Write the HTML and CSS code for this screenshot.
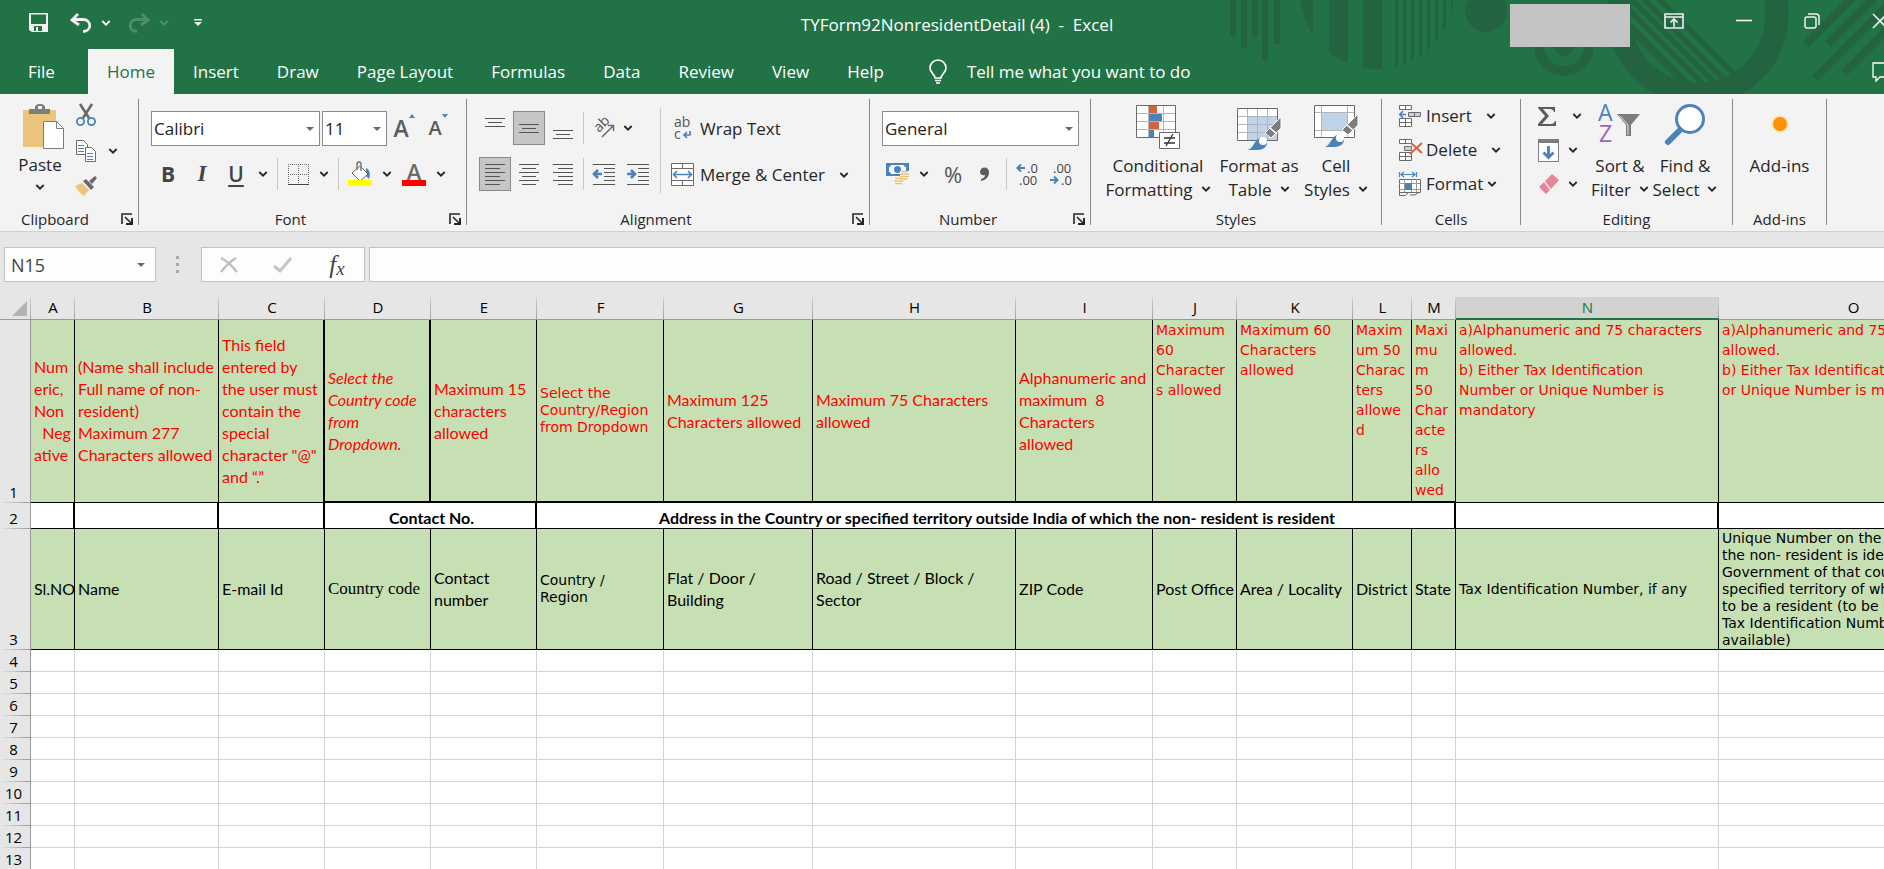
FILE: index.html
```html
<!DOCTYPE html>
<html lang="en">
<head>
<meta charset="utf-8">
<title>TYForm92NonresidentDetail (4) - Excel</title>
<link rel="stylesheet" href="styles.css">
</head>
<body>
<svg class="defs" aria-hidden="true">
  <symbol id="chev" viewBox="0 0 10 6"><path d="M1.300 1L5 4.700 8.700 1" fill="none" stroke="currentColor" stroke-width="1.800"/></symbol>
  <symbol id="tri" viewBox="0 0 8 4"><path d="M0 0h8l-4 4z" fill="#6a6a6a"/></symbol>
  <symbol id="launch" viewBox="0 0 12 12"><path d="M1 11V1h10M4 4l6 6" fill="none" stroke="#262626" stroke-width="1.6"/><path d="M12 5v7H5v-2h5V5z" fill="#262626"/></symbol>
</svg>

<header class="top">
  <svg class="pattern" width="660" height="94" viewBox="1224 0 660 94" aria-hidden="true">
    <defs>
      <clipPath id="inner"><circle cx="1698" cy="15" r="68"/></clipPath>
      <clipPath id="disc"><circle cx="1377" cy="-8" r="77"/></clipPath>
    </defs>
    <g fill="#24633f">
      <path d="M1230 0h6v37h-6zM1241 0h6v48h-6zM1252 0h6v37h-6zM1262 0h6v61h-6zM1274 0h6v44h-6z"/>
      <path clip-path="url(#disc)" d="M1299 0h14v80h-14zM1329 0h19v80h-19zM1363 0h19v80h-19zM1395 0h3v80h-3zM1403 0h3v80h-3zM1411 0h3v80h-3zM1419 0h3v80h-3zM1427 0h3v80h-3zM1435 0h3v80h-3zM1443 0h3v80h-3zM1451 0h3v80h-3z"/>
      <circle cx="1486" cy="11" r="21"/>
      <circle cx="1564" cy="46" r="10"/>
    </g>
    <g fill="none" stroke="#24633f">
      <circle cx="1564" cy="46" r="25" stroke-width="10"/>
      <circle cx="1698" cy="15" r="79" stroke-width="23"/>
      <g clip-path="url(#inner)">
        <path d="M1590 -13l110 110" stroke-width="8"/>
        <path d="M1590 -29l120 120M1590 -42l130 130M1590 -55l140 140M1590 -70l150 150" stroke-width="5"/>
      </g>
      <path d="M1806 44l50-50M1828 44l50-50M1815 78l80-80M1844 73l50-50" stroke-width="8"/>
    </g>
  </svg>
  <div class="titlebar">
    <div class="qat">
      <button aria-label="Save"><svg width="20" height="20" viewBox="0 0 20 20"><path fill="#f0f0f0" fill-rule="evenodd" d="M0 0h19v19H3l-3-2zM2 1.500v9.500h15V1.500zM5 13v5h2v-4h2v4h4v-5z"/></svg></button>
      <button aria-label="Undo"><svg width="22" height="20" viewBox="0 0 22 20"><path d="M8 1L2 7l7 5M2.500 6.500H13c9 0 9 12 0 12" fill="none" stroke="#f0f0f0" stroke-width="2.800"/></svg></button>
      <button class="white" aria-label="Undo list"><svg width="10" height="6"><use href="#chev"/></svg></button>
      <button aria-label="Redo"><svg width="22" height="20" viewBox="0 0 22 20"><path d="M14 1l6 6-7 5M19.500 6.500H9c-9 0-9 12 0 12" fill="none" stroke="#4d9068" stroke-width="2.800"/></svg></button>
      <button class="dim" aria-label="Redo list"><svg width="10" height="6"><use href="#chev"/></svg></button>
      <button class="customize" aria-label="Customize toolbar"><svg width="8" height="8" viewBox="0 0 8 8"><path d="M0 0h8v1.500H0zM0 3h8L4 7z" fill="#f0f0f0"/></svg></button>
    </div>
    <h1>TYForm92NonresidentDetail (4)&nbsp; -&nbsp; Excel</h1>
    <div class="window">
      <div class="account"></div>
      <button aria-label="Ribbon display"><svg width="20" height="16" viewBox="0 0 20 16"><g fill="none" stroke="#f0f0f0" stroke-width="1.600"><path d="M1 1h18v14H1zM1 4h18M10 14V6M6.500 9.500L10 6l3.500 3.500"/></g></svg></button>
      <button aria-label="Minimize"><svg width="16" height="16" viewBox="0 0 16 16"><path d="M0 7.500h16" stroke="#f0f0f0" stroke-width="1.600"/></svg></button>
      <button aria-label="Restore"><svg width="16" height="16" viewBox="0 0 16 16"><g fill="none" stroke="#f0f0f0" stroke-width="1.500"><rect x="1" y="4" width="11" height="11" rx="2"/><path d="M4 1h8q3 0 3 3v8"/></g></svg></button>
      <button class="close" aria-label="Close"><svg width="16" height="16" viewBox="0 0 16 16"><path d="M1 1l14 14M15 1L1 15" stroke="#f0f0f0" stroke-width="1.600"/></svg></button>
    </div>
  </div>
  <nav class="tabs">
    <button class="file">File</button>
    <button class="on">Home</button>
    <button>Insert</button>
    <button>Draw</button>
    <button>Page Layout</button>
    <button>Formulas</button>
    <button>Data</button>
    <button>Review</button>
    <button>View</button>
    <button>Help</button>
    <button class="tell"><svg width="18" height="24" viewBox="0 0 18 24"><g fill="none" stroke="#fff" stroke-width="1.600"><path d="M6 18c0-4-5-5-5-10a8 8 0 0 1 16 0c0 5-5 6-5 10zM6 20.500h6M7 23h4"/></g></svg>Tell me what you want to do</button>
    <button class="comment" aria-label="Comments"><svg width="20" height="20" viewBox="0 0 20 20"><path d="M1 1h18v14H8l-4 4v-4H1z" fill="none" stroke="#fff" stroke-width="1.300"/></svg></button>
  </nav>
</header>

<div class="ribbon">
  <section class="group clipboard">
    <div class="body">
      <button class="big paste"><svg width="42" height="46" viewBox="0 0 42 46"><path d="M0 6h33v37H0z" fill="#ecc57c"/><path d="M6 5h6V2l3-2h4l3 2v3h5v5H6zM15 2v3h4V2z" fill="#7d7d7d" fill-rule="evenodd"/><path d="M20.500 17.500h13l7 7v20h-20z" fill="#fff" stroke="#7d7d7d"/><path d="M33.500 17.500v7h7" fill="none" stroke="#7d7d7d"/></svg><span>Paste</span><svg width="10" height="6"><use href="#chev"/></svg></button>
      <div class="stack">
        <button aria-label="Cut"><svg width="20" height="22" viewBox="0 0 20 22"><path d="M4 0l9 14M16 0L7 14" stroke="#6a6a6a" stroke-width="2.600"/><g fill="none" stroke="#4a82ba" stroke-width="1.800"><circle cx="4.500" cy="17.500" r="3.600"/><circle cx="15.500" cy="17.500" r="3.600"/></g></svg></button>
        <button aria-label="Copy"><svg width="20" height="22" viewBox="0 0 20 22"><g fill="#fff" stroke="#6a6a6a"><path d="M.5.5h7l4 4v10h-11z"/><path d="M9.500 7.500h6l4 4v10h-10z"/></g><path d="M2 5.500h6M2 8.500h6M2 11.500h6M11 13.500h6M11 16.500h6M11 19.500h6" stroke="#4a82ba"/></svg></button>
        <button aria-label="Format Painter"><svg width="22" height="20" viewBox="0 0 22 20"><path d="M0 10l7-3 7 7-5 6c-4-3-7-6-9-10z" fill="#ecc57c"/><path d="M8 5l3-2 8 8-3 3zM14 5l6-5 2 2-5 6z" fill="#6a6a6a"/></svg></button>
      </div>
      <button class="copymenu" aria-label="Copy options"><svg width="10" height="6"><use href="#chev"/></svg></button>
    </div>
    <footer>Clipboard<button aria-label="Clipboard settings"><svg width="12" height="12"><use href="#launch"/></svg></button></footer>
  </section>
  <div class="sep"></div>

  <section class="group font">
    <div class="body rows">
      <div class="row">
        <label class="combo face"><select aria-label="Font"><option>Calibri</option></select><svg width="8" height="4"><use href="#tri"/></svg></label>
        <label class="combo size"><select aria-label="Font size"><option>11</option></select><svg width="8" height="4"><use href="#tri"/></svg></label>
        <button class="w34 grow" aria-label="Increase font size">A<svg width="6" height="4" viewBox="0 0 6 4"><path d="M0 4h6L3 0z" fill="#4a82ba"/></svg></button>
        <button class="w34 shrink" aria-label="Decrease font size">A<svg width="6" height="4" viewBox="0 0 6 4"><path d="M0 0h6L3 4z" fill="#4a82ba"/></svg></button>
      </div>
      <div class="row">
        <button class="w34 glyph bold">B</button><button class="w34 glyph ital">I</button><button class="w34 glyph under">U</button>
        <button class="w20" aria-label="Underline options"><svg width="10" height="6"><use href="#chev"/></svg></button>
        <i class="mini"></i>
        <button class="w32" aria-label="Borders"><svg width="21" height="21" viewBox="0 0 21 21"><path d="M.5 0v19M10.500 0v19M20.500 0v19M0 .5h21M0 10.500h21" stroke="#6a6a6a" stroke-dasharray="1 1" fill="none"/><path d="M0 20.500h21" stroke="#444"/></svg></button>
        <button class="w20" aria-label="Border options"><svg width="10" height="6"><use href="#chev"/></svg></button>
        <i class="mini"></i>
        <button class="w34" aria-label="Fill Color"><svg width="24" height="24" viewBox="0 0 24 24"><path d="M18 6c5 2 4 8 3 11l-3-3z" fill="#4a82ba"/><path d="M12 4l8 8-8 7-8-8z" fill="#fff" stroke="#6a6a6a"/><path d="M9 8V2q0-2 2-2t2 2v7" fill="none" stroke="#6a6a6a" stroke-width="1.300"/><path d="M0 18h24v6H0z" fill="#ff0"/></svg></button>
        <button class="w20" aria-label="Fill options"><svg width="10" height="6"><use href="#chev"/></svg></button>
        <button class="w34 fontcolor" aria-label="Font Color">A</button>
        <button class="w20" aria-label="Font color options"><svg width="10" height="6"><use href="#chev"/></svg></button>
      </div>
    </div>
    <footer>Font<button aria-label="Font settings"><svg width="12" height="12"><use href="#launch"/></svg></button></footer>
  </section>
  <div class="sep"></div>

  <section class="group align">
    <div class="body">
      <div class="rows">
        <div class="row">
          <button class="tog" aria-label="Top Align"><svg width="20" height="22" viewBox="0 0 20 22"><path d="M0 1.500h20M3 5.500h14M0 9.500h20" stroke="#555"/></svg></button>
          <button class="tog pressed" aria-label="Middle Align"><svg width="20" height="22" viewBox="0 0 20 22"><path d="M0 7.500h20M3 11.500h14M0 15.500h20" stroke="#555"/></svg></button>
          <button class="tog" aria-label="Bottom Align"><svg width="20" height="22" viewBox="0 0 20 22"><path d="M0 13.500h20M3 17.500h14M0 21.500h20" stroke="#555"/></svg></button>
          <i class="mini"></i>
          <button class="w32" aria-label="Orientation"><svg width="22" height="22" viewBox="0 0 22 22"><text x="0" y="0" transform="translate(6 16) rotate(-45)" class="t-ab">ab</text><path d="M9 20L20 9M15 8.500h5.500V14" fill="none" stroke="#6a6a6a" stroke-width="1.500"/></svg></button>
          <button class="w12" aria-label="Orientation options"><svg width="10" height="6"><use href="#chev"/></svg></button>
        </div>
        <div class="row">
          <button class="tog pressed" aria-label="Align Left"><svg width="20" height="22" viewBox="0 0 20 22"><path d="M0 1.500h20M0 5.500h15M0 9.500h20M0 13.500h15M0 17.500h20M0 21.500h15" stroke="#555"/></svg></button>
          <button class="tog" aria-label="Center"><svg width="20" height="22" viewBox="0 0 20 22"><path d="M0 1.500h20M3 5.500h14M0 9.500h20M3 13.500h14M0 17.500h20M3 21.500h14" stroke="#555"/></svg></button>
          <button class="tog" aria-label="Align Right"><svg width="20" height="22" viewBox="0 0 20 22"><path d="M0 1.500h20M5 5.500h15M0 9.500h20M5 13.500h15M0 17.500h20M5 21.500h15" stroke="#555"/></svg></button>
          <i class="mini"></i>
          <button class="tog" aria-label="Decrease Indent"><svg width="22" height="22" viewBox="0 0 22 22"><path d="M0 1.500h22M11 5.500h11M11 9.500h11M11 13.500h11M11 17.500h11M0 21.500h22" stroke="#555"/><path d="M9 11H2M5 7l-4 4 4 4" fill="none" stroke="#4a82ba" stroke-width="2.600"/></svg></button>
          <button class="tog" aria-label="Increase Indent"><svg width="22" height="22" viewBox="0 0 22 22"><path d="M0 1.500h22M11 5.500h11M11 9.500h11M11 13.500h11M11 17.500h11M0 21.500h22" stroke="#555"/><path d="M0 11h7M4 7l4 4-4 4" fill="none" stroke="#4a82ba" stroke-width="2.600"/></svg></button>
        </div>
      </div>
      <i class="tall"></i>
      <div class="rows wrapcol">
        <button class="line"><svg width="23" height="24" viewBox="0 0 23 24"><text x="3" y="10" class="t-ab">ab</text><text x="3" y="22" class="t-ab">c</text><path d="M19 14v4h-5M16 15l-3 3 3 3" fill="none" stroke="#4a82ba" stroke-width="1.700"/></svg>Wrap Text</button>
        <button class="line"><svg width="23" height="23" viewBox="0 0 23 23"><path d="M.5.5h22v22H.5zM.5 5.500h22M.5 17.500h22M11.500 0v5M11.500 18v5" fill="#fff" stroke="#6a6a6a"/><path d="M3 11.500h17M6 8l-3.500 3.500L6 15M17 8l3.500 3.500L17 15" fill="none" stroke="#4a82ba" stroke-width="1.600"/></svg>Merge &amp; Center<svg class="far" width="10" height="6"><use href="#chev"/></svg></button>
      </div>
    </div>
    <footer>Alignment<button aria-label="Alignment settings"><svg width="12" height="12"><use href="#launch"/></svg></button></footer>
  </section>
  <div class="sep"></div>

  <section class="group number">
    <div class="body rows">
      <div class="row">
        <label class="combo fmt"><select aria-label="Number format"><option>General</option></select><svg width="8" height="4"><use href="#tri"/></svg></label>
      </div>
      <div class="row">
        <button class="w32" aria-label="Accounting format"><svg width="24" height="24" viewBox="0 0 24 24"><path d="M0 1h23v13H0z" fill="#4a82ba"/><path d="M5 3h13q0 2 2 2v5q-2 0-2 2H5q0-2-2-2V5q2 0 2-2z" fill="#fff"/><circle cx="11.500" cy="7.500" r="3.500" fill="#4a82ba"/><path d="M14 9h9v9h-9zM8 16h9v6H8z" fill="#fff"/><path d="M15 9.500h7M14 12h9M14 14.500h9M15 17h7M9 16.500h7M8 19h9M9 21.500h7" stroke="#e8bf74" stroke-width="1.700"/></svg></button>
        <button class="w20" aria-label="Accounting options"><svg width="10" height="6"><use href="#chev"/></svg></button>
        <button class="w34 pct">%</button>
        <button class="w34" aria-label="Comma Style"><svg width="10" height="15" viewBox="0 0 10 15"><path d="M0 5a4.500 4.500 0 0 1 9 0c0 5-3 8-8 9v-2c3-1 4-2 4-4C2 9 0 7 0 5z" fill="#5c5c5c"/></svg></button>
        <i class="mini"></i>
        <button class="w34" aria-label="Increase Decimal"><svg width="24" height="24" viewBox="0 0 24 24"><text x="11" y="11" class="t-dec">.0</text><text x="3" y="23" class="t-dec">.00</text><path d="M9 6H2M5 2.500L1.500 6 5 9.500" fill="none" stroke="#4a82ba" stroke-width="2"/></svg></button>
        <button class="w34" aria-label="Decrease Decimal"><svg width="24" height="24" viewBox="0 0 24 24"><text x="3" y="11" class="t-dec">.00</text><text x="11" y="23" class="t-dec">.0</text><path d="M0 18h7M4 14.500L7.500 18 4 21.500" fill="none" stroke="#4a82ba" stroke-width="2"/></svg></button>
      </div>
    </div>
    <footer>Number<button aria-label="Number settings"><svg width="12" height="12"><use href="#launch"/></svg></button></footer>
  </section>
  <div class="sep"></div>

  <section class="group styles">
    <div class="body">
      <button class="big cf"><svg width="44" height="46" viewBox="0 0 44 46"><path d="M.5 1.500h39v32H.5z" fill="#fff"/><path d="M0 9.500h40M0 17.500h40M0 25.500h40M12.500 1v32M27.500 1v32" stroke="#b5b5b5"/><path d="M.5 1.500h39v32H.5z" fill="none" stroke="#6a6a6a"/><path d="M13 2h8v7h-8zM13 18h10v7H13z" fill="#d9603b"/><path d="M13 10h13v7H13zM13 26h5v7h-5z" fill="#4a82ba"/><path d="M23.500 28.500h20v16h-20z" fill="#fff" stroke="#6a6a6a"/><path d="M28 34h11M28 39h11M37 30l-7 12" stroke="#333" stroke-width="1.300"/></svg><span>Conditional</span><span>Formatting <svg width="10" height="6"><use href="#chev"/></svg></span></button>
      <button class="big ft"><svg width="44" height="46" viewBox="0 0 44 46"><path d="M.5 4.500h40v32H.5z" fill="#fff"/><path d="M11 13h29v23H11z" fill="#c0d3ea"/><path d="M0 12.500h40M0 20.500h40M0 28.500h40M10.500 5v32M20.500 5v32M30.500 5v32" stroke="#b5b5b5"/><path d="M.5 4.500h40v32H.5z" fill="none" stroke="#6a6a6a"/><path d="M44 13v11L34 34l-6-5z" fill="#7d7d7d" stroke="#fff"/><path d="M33 24l7 6" stroke="#fff" stroke-width="1.500"/><path d="M11 46c6-2 6-10 12-12s9 3 6 8-11 4-18 4z" fill="#4a82ba"/><circle cx="26" cy="37" r="4" fill="#fff"/></svg><span>Format as</span><span>Table <svg width="10" height="6"><use href="#chev"/></svg></span></button>
      <button class="big cs"><svg width="44" height="46" viewBox="0 0 44 46"><path d="M.5 1.500h40v32H.5z" fill="#fff"/><path d="M8 9h25v17H8z" fill="#c0d3ea"/><path d="M0 8.500h40M0 26.500h40M7.500 1v32M33.500 1v32" stroke="#b5b5b5"/><path d="M.5 1.500h40v32H.5z" fill="none" stroke="#6a6a6a"/><path d="M44 10v11L34 31l-6-5z" fill="#7d7d7d" stroke="#fff"/><path d="M33 21l7 6" stroke="#fff" stroke-width="1.500"/><path d="M11 43c6-2 6-10 12-12s9 3 6 8-11 4-18 4z" fill="#4a82ba"/><circle cx="26" cy="34" r="4" fill="#fff"/></svg><span>Cell</span><span>Styles <svg width="10" height="6"><use href="#chev"/></svg></span></button>
    </div>
    <footer>Styles</footer>
  </section>
  <div class="sep"></div>

  <section class="group cells">
    <div class="body thirds">
      <button class="line"><svg width="23" height="22" viewBox="0 0 23 22"><g fill="#fff" stroke="#6a6a6a"><path d="M.5.5h12v4H.5zM6.500 0v5M.5 13.500h12v8H.5zM6.500 13v9M0 17.500h13"/><path d="M9.500 7.500h12v4h-12zM15.500 7v5" fill="#c0d3ea"/></g><path d="M7 9.500H1M4 6L.8 9.500 4 13" fill="none" stroke="#4a82ba" stroke-width="1.700"/></svg>Insert<svg class="far" width="10" height="6"><use href="#chev"/></svg></button>
      <button class="line"><svg width="23" height="22" viewBox="0 0 23 22"><g fill="#fff" stroke="#6a6a6a"><path d="M.5.5h12v4H.5zM6.500 0v5M.5 13.500h12v8H.5zM6.500 13v9M0 17.500h13"/><path d="M5.500 7.500h7v4h-7z" fill="#c0d3ea"/></g><path d="M12 4l11 10M23 4L11 15" fill="none" stroke="#d9603b" stroke-width="2"/></svg>Delete<svg class="far" width="10" height="6"><use href="#chev"/></svg></button>
      <button class="line near"><svg width="23" height="24" viewBox="0 0 23 24"><path d="M.5 7.500h21v13H.5z" fill="#fff" stroke="#6a6a6a"/><path d="M0 11.500h21M0 17.500h21M5.500 7v13M12.500 7v13M17.500 7v13" stroke="#999"/><path d="M6 11h7v7H6z" fill="#4a82ba"/><path d="M.5 20v3.500h6l3-3M11 23h5l4-3" fill="none" stroke="#6a6a6a"/><path d="M.5 0v5M17.500 0v5M2 2.500h14M5 0L2 2.500 5 5M13 0l3 2.500L13 5" fill="none" stroke="#4a82ba" stroke-width="1.200"/></svg>Format<svg class="far" width="10" height="6"><use href="#chev"/></svg></button>
    </div>
    <footer>Cells</footer>
  </section>
  <div class="sep"></div>

  <section class="group editing">
    <div class="body">
      <div class="thirds">
        <button class="line sum" aria-label="AutoSum"><svg width="18" height="19" viewBox="0 0 18 19"><path d="M0 0h17v5h-1q-1-3-4-3H5l6 7-7 8h9q3 0 4-3h1v5H0v-2l7-8-7-8z" fill="#5c5c5c"/></svg><svg width="10" height="6"><use href="#chev"/></svg></button>
        <button class="line" aria-label="Fill"><svg width="22" height="23" viewBox="0 0 22 23"><path d="M.5 2.500h20v20H.5z" fill="#fff" stroke="#7d7d7d"/><path d="M0 0h21v4H0z" fill="#7d7d7d"/><path d="M10.500 7v12M5.500 13.500l5 5 5-5" fill="none" stroke="#4a82ba" stroke-width="2.800"/></svg><svg width="10" height="6"><use href="#chev"/></svg></button>
        <button class="line" aria-label="Clear"><svg width="22" height="20" viewBox="0 0 22 20"><path d="M7 7l7-7 7 6-8 9zM6 8l6 8-4 4-7-7z" fill="#e78497"/></svg><svg width="10" height="6"><use href="#chev"/></svg></button>
      </div>
      <button class="big sort"><svg width="44" height="40" viewBox="0 0 44 40"><text x="0" y="17" class="t-az" fill="#4a82ba">A</text><text x="1" y="38" class="t-az" fill="#9a62b8">Z</text><path d="M19 10h23L33 21v11h-5V21z" fill="#7d7d7d"/><path d="M22 12l8 9v10" fill="none" stroke="#e8e8e8"/></svg><span>Sort &amp;</span><span>Filter <svg width="10" height="6"><use href="#chev"/></svg></span></button>
      <button class="big find"><svg width="40" height="42" viewBox="0 0 40 42"><path d="M3 38l13-13" stroke="#4a82ba" stroke-width="6" stroke-linecap="round"/><circle cx="25" cy="15" r="13.500" fill="#fff" stroke="#4a82ba" stroke-width="3"/></svg><span>Find &amp;</span><span>Select <svg width="10" height="6"><use href="#chev"/></svg></span></button>
    </div>
    <footer>Editing</footer>
  </section>
  <div class="sep"></div>

  <section class="group addins">
    <div class="body"><button class="big"><svg width="18" height="42" viewBox="0 0 18 42"><circle cx="9" cy="20" r="8.500" fill="#ffdfb5"/><circle cx="9" cy="20" r="7" fill="#ff9200"/></svg><span>Add-ins</span></button></div>
    <footer>Add-ins</footer>
  </section>
  <div class="sep"></div>
</div>

<div class="formula">
  <div class="namebox"><input value="N15" aria-label="Name Box"><svg width="8" height="4"><use href="#tri"/></svg></div>
  <svg class="dots" width="3" height="17" viewBox="0 0 3 17"><path d="M0 0h3v3H0zM0 7h3v3H0zM0 14h3v3H0z" fill="#a8a8a8"/></svg>
  <div class="fx">
    <button aria-label="Cancel"><svg width="18" height="16" viewBox="0 0 18 16"><path d="M1 1q8 4 16 14M16 1Q8 6 1 15" fill="none" stroke="#bdbdbd" stroke-width="2.400"/></svg></button>
    <button aria-label="Enter"><svg width="20" height="16" viewBox="0 0 20 16"><path d="M1 9l6 5L18 1" fill="none" stroke="#c6c6c6" stroke-width="3"/></svg></button>
    <button class="fn" aria-label="Insert Function"><i>f</i><i class="sub">x</i></button>
  </div>
  <input class="entry" aria-label="Formula Bar">
</div>

<main class="sheet">
<table>
  <colgroup><col class="c0"><col class="cA"><col class="cB"><col class="cC"><col class="cC"><col class="cC"><col class="cF"><col class="cG"><col class="cH"><col class="cI"><col class="cJ"><col class="cK"><col class="cL"><col class="cA"><col class="cN"><col class="cO"></colgroup>
  <thead><tr><th class="all"><svg width="15" height="15" viewBox="0 0 15 15"><path d="M15 0v15H0z" fill="#b3b3b3"/></svg></th><th>A</th><th>B</th><th>C</th><th>D</th><th>E</th><th>F</th><th>G</th><th>H</th><th>I</th><th>J</th><th>K</th><th>L</th><th>M</th><th class="sel">N</th><th>O</th></tr></thead>
  <tbody>
  <tr class="r1 green"><th>1</th>
    <td>Num<br>eric,<br>Non<br>&nbsp; Neg<br>ative</td>
    <td>(Name shall include<br>Full name of non-<br>resident)<br>Maximum 277<br>Characters allowed</td>
    <td class="br2">This field<br>entered by<br>the user must<br>contain the<br>special<br>character "@"<br>and “.”</td>
    <td class="br2 bb2"><em>Select the<br>Country code<br>from<br>Dropdown.</em></td>
    <td class="bb2">Maximum 15<br>characters<br>allowed</td>
    <td class="bb2 v tight">Select the<br>Country/Region<br>from Dropdown</td>
    <td class="bb2">Maximum 125<br>Characters allowed</td>
    <td class="bb2">Maximum 75 Characters<br>allowed</td>
    <td class="bb2">Alphanumeric and<br>maximum&nbsp; 8<br>Characters<br>allowed</td>
    <td class="bb2 v high">Maximum<br>60<br>Character<br>s allowed</td>
    <td class="bb2 v high">Maximum 60<br>Characters<br>allowed</td>
    <td class="bb2 v high">Maxim<br>um 50<br>Charac<br>ters<br>allowe<br>d</td>
    <td class="bb2 v high">Maxi<br>mu<br>m<br>50<br>Char<br>acte<br>rs<br>allo<br>wed</td>
    <td class="v high">a)Alphanumeric and 75 characters<br>allowed.<br>b) Either Tax Identification<br>Number or Unique Number is<br>mandatory</td>
    <td class="v high">a)Alphanumeric and 75 characters<br>allowed.<br>b) Either Tax Identification Number<br>or Unique Number is mandatory</td>
  </tr>
  <tr class="r2"><th>2</th><td class="br2"></td><td class="br2"></td><td class="br2"></td><td class="br2" colspan="2">Contact No.</td><td class="br2" colspan="8">Address in the Country or specified territory outside India of which the non- resident is resident</td><td class="br2"></td><td></td></tr>
  <tr class="r3 green"><th>3</th>
    <td>Sl.NO</td><td>Name</td><td>E-mail Id</td><td class="serif">Country code</td><td>Contact<br>number</td><td class="v tight">Country /<br>Region</td><td>Flat / Door /<br>Building</td><td>Road / Street / Block /<br>Sector</td><td>ZIP Code</td><td>Post Office</td><td>Area / Locality</td><td>District</td><td>State</td><td class="v tight">Tax Identification Number, if any</td>
    <td class="v tight">Unique Number on the basis of which<br>the non- resident is identified by the<br>Government of that country or<br>specified territory of which he claims<br>to be a resident (to be mentioned if<br>Tax Identification Number is not<br>available)</td>
  </tr>
  <tr><th>4</th><td></td><td></td><td></td><td></td><td></td><td></td><td></td><td></td><td></td><td></td><td></td><td></td><td></td><td></td><td></td></tr>
  <tr><th>5</th><td></td><td></td><td></td><td></td><td></td><td></td><td></td><td></td><td></td><td></td><td></td><td></td><td></td><td></td><td></td></tr>
  <tr><th>6</th><td></td><td></td><td></td><td></td><td></td><td></td><td></td><td></td><td></td><td></td><td></td><td></td><td></td><td></td><td></td></tr>
  <tr><th>7</th><td></td><td></td><td></td><td></td><td></td><td></td><td></td><td></td><td></td><td></td><td></td><td></td><td></td><td></td><td></td></tr>
  <tr><th>8</th><td></td><td></td><td></td><td></td><td></td><td></td><td></td><td></td><td></td><td></td><td></td><td></td><td></td><td></td><td></td></tr>
  <tr><th>9</th><td></td><td></td><td></td><td></td><td></td><td></td><td></td><td></td><td></td><td></td><td></td><td></td><td></td><td></td><td></td></tr>
  <tr><th>10</th><td></td><td></td><td></td><td></td><td></td><td></td><td></td><td></td><td></td><td></td><td></td><td></td><td></td><td></td><td></td></tr>
  <tr><th>11</th><td></td><td></td><td></td><td></td><td></td><td></td><td></td><td></td><td></td><td></td><td></td><td></td><td></td><td></td><td></td></tr>
  <tr><th>12</th><td></td><td></td><td></td><td></td><td></td><td></td><td></td><td></td><td></td><td></td><td></td><td></td><td></td><td></td><td></td></tr>
  <tr><th>13</th><td></td><td></td><td></td><td></td><td></td><td></td><td></td><td></td><td></td><td></td><td></td><td></td><td></td><td></td><td></td></tr>
  </tbody>
</table>
</main>
</body>
</html>
```

FILE: styles.css
```css
* { box-sizing: border-box; }
html { height: 100%; }
body { margin: 0; height: 100%; display: flex; flex-direction: column; overflow: hidden; background: #fff; color: #262626; font: 17px/24px "Open Sans", "Noto Sans", sans-serif; }
button, input, select { font: inherit; color: inherit; margin: 0; padding: 0; border: 0; background: none; }
button { display: flex; align-items: center; justify-content: center; flex: none; white-space: nowrap; }
svg { flex: none; display: block; overflow: visible; }
.defs { position: absolute; width: 0; height: 0; overflow: hidden; }

/* title bar and tabs */
.top { position: relative; flex: none; background: #217346; color: #fff; overflow: hidden; }
.pattern { position: absolute; top: 0; right: 0; }
.titlebar { position: relative; display: flex; height: 49px; }
.qat { flex: none; width: 404px; display: flex; align-items: center; padding: 0 0 4px 29px; }
.qat button:nth-child(2) { margin-left: 21px; }
.qat button:nth-child(3) { margin-left: 9px; }
.qat button:nth-child(4) { margin-left: 17px; }
.qat button:nth-child(5) { margin-left: 9px; }
.customize { margin-left: 25px; }
.dim { color: #4d9068; }
.titlebar h1 { flex: 1; margin: 0; font-size: 17px; font-weight: 400; line-height: 50px; text-align: center; white-space: nowrap; }
.window { flex: none; width: 374px; display: flex; align-items: flex-start; overflow: hidden; }
.account { flex: none; width: 120px; height: 43px; margin: 4px 34px 0 0; background: #c4c4c4; }
.window button { margin: 13px 52px 0 0; }
.window button.close { margin-right: 0; }
.tabs { position: relative; display: flex; height: 45px; overflow: hidden; }
.tabs button { padding: 0 19px; }
.tabs .file { width: 88px; justify-content: flex-start; padding: 0 0 0 28px; }
.tabs .on { width: 86px; padding: 0; background: #f3f3f3; color: #217346; }
.tabs .tell { gap: 20px; padding-left: 26px; }
.tabs .comment { margin-left: auto; margin-right: -8px; padding: 0; }

/* ribbon */
.ribbon { flex: none; display: flex; background: #f3f3f3; border-bottom: 1px solid #d0d0d0; overflow: hidden; }
.sep { flex: none; width: 1px; margin: 5px 0 6px; background: #8a8a8a; }
.group { flex: none; padding: 5px 0 2px; }
.group .body { display: flex; height: 110px; }
.group footer { position: relative; height: 20px; font-size: 15px; line-height: 20px; text-align: center; }
.group footer button { position: absolute; right: 5px; top: 4px; }
.group .rows { display: flex; flex-direction: column; padding-top: 12px; gap: 12px; }
.row { display: flex; align-items: center; height: 34px; }
.thirds, .group .thirds { display: flex; flex-direction: column; }
.thirds .line { height: 34px; }
.line { justify-content: flex-start; }
.w12 { width: 12px; } .w20 { width: 20px; } .w32 { width: 32px; } .w34 { width: 34px; }
.mini { flex: none; width: 1px; height: 32px; margin: 0 4px; background: #c8c8c8; }
.tall { flex: none; width: 1px; height: 85px; margin: 9px 10px 0 6px; background: #c8c8c8; }
.big { height: 103px; flex-direction: column; justify-content: flex-start; align-self: flex-start; padding-top: 5px; }
.big > svg:first-child { margin-bottom: auto; }
.big span { display: flex; align-items: center; gap: 8px; line-height: 24px; }
.big span svg { margin-bottom: 2px; }

.clipboard { width: 138px; }
.clipboard footer { padding-right: 28px; }
.paste { width: 80px; }
.paste > svg:first-child { margin: 0 0 3px 8px; }
.paste > svg:last-child { margin-top: 7px; }
.stack { width: 24px; display: flex; flex-direction: column; align-items: center; gap: 14px; padding-top: 5px; margin-left: -6px; }
.copymenu { width: 30px; height: 103px; }

.font { width: 327px; }
.font .row { padding-left: 12px; }
.font footer, .align footer, .number footer { padding-right: 24px; }
.combo { position: relative; flex: none; display: block; }
.combo select { display: block; width: 100%; height: 35px; padding: 2px 0 0 2px; appearance: none; background: #fff; border: 1px solid #8a8a8a; border-radius: 0; color: #222; }
.combo svg { position: absolute; right: 6px; top: 16px; }
.face { width: 169px; }
.size { width: 65px; margin-left: 2px; }
.grow, .shrink { align-items: flex-end; color: #5c5c5c; font-weight: 600; line-height: 28px; }
.grow { font-size: 23px; } .shrink { font-size: 20px; }
.grow svg, .shrink svg { align-self: flex-start; }
.glyph { font-size: 21px; color: #444; }
.bold { font-weight: 700; }
.ital { font-family: "Liberation Serif", serif; font-style: italic; font-weight: 700; font-size: 23px; }
.under { text-decoration: underline; text-underline-offset: 3px; font-weight: 600; }
.fontcolor { height: 24px; width: 24px; margin: 0 5px; border-bottom: 6px solid #f00; font-size: 22px; font-weight: 600; line-height: 18px; color: #6a6a6a; }

.align { width: 402px; }
.align .row { padding-left: 12px; gap: 2px; }
.align .mini { margin: 0 2px; }
.tog { width: 32px; height: 34px; }
.pressed { background: #c6c6c6; border: 1px solid #8a8a8a; }
.wrapcol .line { height: 34px; gap: 6px; padding-top: 1px; }
.wrapcol .line .far { margin-left: 8px; }
.line .far { margin-left: 10px; }
.t-ab { font: 14px "Open Sans", sans-serif; fill: #555; }
.t-dec { font: 13px "Open Sans", sans-serif; fill: #444; }
.t-az { font: 23px "Open Sans", sans-serif; }

.number { width: 220px; }
.number .row { padding-left: 12px; }
.fmt { width: 197px; }
.pct { padding-left: 4px; font-size: 22px; color: #555; }

.styles { width: 290px; }
.styles .body { padding-left: 10px; }
.cf { width: 114px; } .ft { width: 88px; } .cs { width: 66px; }
.cells { width: 138px; }
.cells .body { padding-left: 17px; }
.cells .line { gap: 4px; }
.cells .near .far { margin-left: 0; }
.editing { width: 211px; }
.editing .thirds { width: 66px; padding-left: 17px; }
.editing .line { gap: 8px; }
.editing .sum { gap: 16px; }
.sort { width: 66px; } .find { width: 64px; }
.addins { width: 93px; }
.addins .body { justify-content: center; }
.addins .big { height: 79px; }

/* formula bar */
.formula { flex: none; display: flex; align-items: flex-start; height: 65px; padding: 15px 0 0 4px; background: #e6e6e6; }
.namebox { position: relative; width: 152px; height: 35px; background: #fdfdfd; border: 1px solid #c3c3c3; }
.namebox input { display: block; width: 120px; height: 33px; padding-left: 6px; color: #444; font-size: 18px; }
.namebox svg { position: absolute; right: 10px; top: 15px; }
.dots { margin: 9px 22px 0 20px; }
.fx { display: flex; width: 164px; height: 35px; background: #fdfdfd; border: 1px solid #c3c3c3; }
.fx button { flex: 1; }
.fn { font: italic 400 25px/30px "Liberation Serif", serif; color: #444; }
.fn .sub { font-size: 19px; line-height: 24px; align-self: flex-end; }
.entry { flex: 1; min-width: 0; height: 35px; margin-left: 4px; background: #fdfdfd; border: 1px solid #c3c3c3; border-right: 0; }

/* sheet */
.sheet { flex: 1; min-height: 0; overflow: hidden; }
table { width: 1988px; table-layout: fixed; border-collapse: separate; border-spacing: 0; color: #000; font: 16px/22px Lato, "Open Sans", sans-serif; }
.c0 { width: 31px; } .cA { width: 44px; } .cB { width: 144px; } .cC { width: 106px; } .cF { width: 127px; } .cG { width: 149px; } .cH { width: 203px; } .cI { width: 137px; } .cJ { width: 84px; } .cK { width: 116px; } .cL { width: 59px; } .cN { width: 263px; } .cO { width: 269px; }
th, td { padding: 0 0 0 3px; height: 22px; border: 0 solid #d4d4d4; white-space: nowrap; font-weight: 400; }
td { border-width: 0 1px 1px 0; text-align: left; vertical-align: middle; }
th { padding: 0; text-align: center; font: 15px/18px "Open Sans", sans-serif; }
thead th { height: 23px; padding-bottom: 2px; border-bottom: 1px solid #999; background: linear-gradient(#d0d0d0, #a0a0a0) right / 1px 100% no-repeat #e6e6e6; }
thead th.all { padding: 3px 4px 2px 12px; }
thead th.sel { padding-bottom: 1px; background-color: #d2d2d2; color: #217346; border-bottom: 2px solid #217346; }
tbody th { vertical-align: bottom; border-right: 1px solid #999; background: linear-gradient(90deg, #e6e6e6, #999) bottom / 100% 1px no-repeat #e6e6e6; padding: 0 3px 2px 0; }
.r1 td, .r2 td, .r3 td { border-color: #000; }
.green td { background: #c6e0b4; }
.r1 td { height: 183px; color: #f00; }
.r2 td { height: 26px; padding-bottom: 1px; vertical-align: bottom; text-align: center; font-weight: 700; line-height: 18px; }
.r3 td { height: 121px; }
td.br2 { border-right-width: 2px; }
td.bb2 { border-bottom-width: 2px; }
td.v { font-family: "DejaVu Sans", sans-serif; font-size: 14px; }
td.tight { line-height: 17px; }
td.high { vertical-align: top; line-height: 20px; }
.r3 .serif { font-family: "Liberation Serif", serif; font-size: 17px; }
```
